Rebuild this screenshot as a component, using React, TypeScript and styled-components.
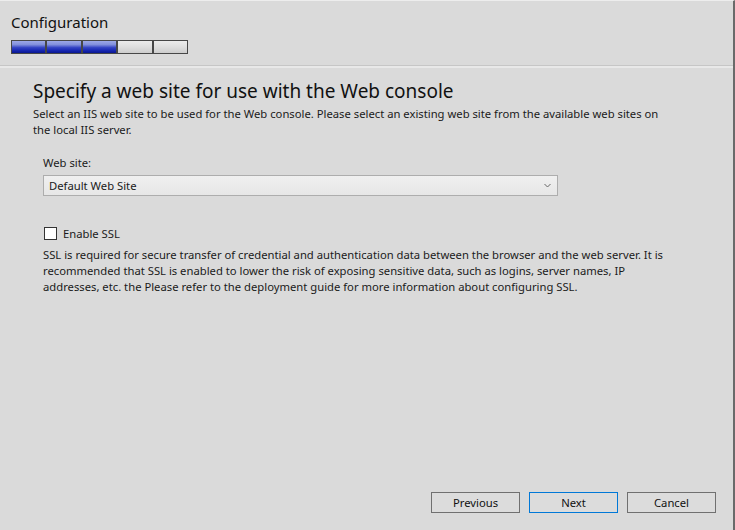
import styled, { createGlobalStyle } from 'styled-components';
import { FC } from 'react';

const GlobalStyle = createGlobalStyle`
  html, body {
    margin: 0;
    padding: 0;
    background: #dadada;
  }
  body {
    font-family: "Noto Sans", "Open Sans", sans-serif;
    color: #1a1a1a;
  }
`;

const Window = styled.div`
  width: 735px;
  height: 530px;
  box-sizing: border-box;
  border-right: 2px solid #6a6a6a;
  border-top: 1px solid #ededed;
  background: #dadada;
  display: flex;
  flex-direction: column;
`;

const Header = styled.header`
  height: 64px;
  box-sizing: border-box;
  padding: 11px 0 0 11px;
  display: flex;
  flex-direction: column;
  gap: 8px;
`;

const Title = styled.h1`
  margin: 0;
  font-size: 15px;
  font-weight: 400;
  line-height: 20px;
  color: #111;
`;

const Progress = styled.div`
  display: flex;
  width: fit-content;
  border: 1px solid #474747;
`;

const Step = styled.div<{ $done: boolean }>`
  width: 33.4px;
  height: 12px;
  & + & {
    border-left: 2px solid #474747;
  }
  background: ${({ $done }) =>
    $done
      ? 'linear-gradient(to bottom, #9ca8e8 0%, #8290dc 30%, #3443c4 55%, #1626b0 80%, #0a1790 100%)'
      : 'linear-gradient(to bottom, #ececec 0%, #e0e0e0 45%, #cdcdcd 100%)'};
`;

const Divider = styled.div`
  border-top: 1px solid #c6c6c6;
  border-bottom: 2px solid #e8e8e8;
`;

const Body = styled.main`
  padding: 10px 40px 0 33px;
  display: flex;
  flex-direction: column;
`;

const Heading = styled.h2`
  margin: 0 0 2px;
  font-size: 19px;
  font-weight: 400;
  line-height: 26px;
  color: #111;
`;

const Text = styled.p`
  margin: 0;
  font-size: 11.25px;
  line-height: 16px;
  white-space: nowrap;
`;

const Field = styled.div`
  margin: 17px 0 0 10px;
  display: flex;
  flex-direction: column;
  gap: 4px;
`;

const Select = styled.div`
  width: 515px;
  height: 21px;
  box-sizing: border-box;
  border: 1px solid #adadad;
  background: linear-gradient(to bottom, #f0f0f0, #e6e6e6);
  display: flex;
  align-items: center;
  justify-content: space-between;
  padding: 0 6px 0 5px;
  font-size: 11.25px;
`;

const SslBlock = styled.div`
  margin: 30px 0 0 10px;
  display: flex;
  flex-direction: column;
  gap: 6px;
`;

const CheckRow = styled.label`
  display: flex;
  align-items: center;
  gap: 6px;
  font-size: 11.25px;
`;

const Box = styled.span`
  width: 13px;
  height: 13px;
  box-sizing: border-box;
  border: 1px solid #333;
  background: #fff;
  margin-left: 1px;
`;

const Footer = styled.footer`
  margin-top: auto;
  padding: 0 17px 17px 0;
  display: flex;
  justify-content: flex-end;
  gap: 9px;
`;

const Button = styled.button<{ $focused?: boolean }>`
  width: 89px;
  height: 21px;
  box-sizing: border-box;
  border: 1px solid ${({ $focused }) => ($focused ? '#0078d7' : '#707070')};
  background: #dcdcdc;
  font-family: inherit;
  font-size: 11.25px;
  color: #111;
  padding: 0;
`;

const Chevron: FC = () => (
  <svg width="7" height="5" viewBox="0 0 7 5">
    <path d="M0.5 1 L3.5 4 L6.5 1" fill="none" stroke="#666" strokeWidth="1" />
  </svg>
);

const steps = [true, true, true, false, false];

export default function App() {
  return (
    <>
      <GlobalStyle />
      <Window>
        <Header>
          <Title>Configuration</Title>
          <Progress>
            {steps.map((done, i) => (
              <Step key={i} $done={done} />
            ))}
          </Progress>
        </Header>
        <Divider />
        <Body>
          <Heading>Specify a web site for use with the Web console</Heading>
          <Text>
            Select an IIS web site to be used for the Web console. Please select an existing web site from the available web sites on
            <br />
            the local IIS server.
          </Text>
          <Field>
            <Text>Web site:</Text>
            <Select>
              <span>Default Web Site</span>
              <Chevron />
            </Select>
          </Field>
          <SslBlock>
            <CheckRow>
              <Box />
              Enable SSL
            </CheckRow>
            <Text>
              SSL is required for secure transfer of credential and authentication data between the browser and the web server. It is
              <br />
              recommended that SSL is enabled to lower the risk of exposing sensitive data, such as logins, server names, IP
              <br />
              addresses, etc. the Please refer to the deployment guide for more information about configuring SSL.
            </Text>
          </SslBlock>
        </Body>
        <Footer>
          <Button>Previous</Button>
          <Button $focused>Next</Button>
          <Button>Cancel</Button>
        </Footer>
      </Window>
    </>
  );
}
